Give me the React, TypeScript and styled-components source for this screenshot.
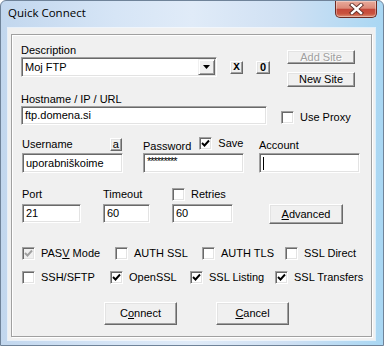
import React from 'react';
import styled, { createGlobalStyle } from 'styled-components';

const GlobalStyle = createGlobalStyle`
	html, body {
		margin: 0;
		padding: 0;
		background: #fff;
	}
	body {
		font-family: 'Liberation Sans', Arial, sans-serif;
		font-size: 11px;
		color: #000;
	}
`;

const Window = styled.div`
	box-sizing: border-box;
	width: 384px;
	height: 346px;
	display: flex;
	flex-direction: column;
	border: 1px solid #6f8399;
	border-radius: 6px 6px 0 0;
	background: linear-gradient(to right, #c2d7ee 0%, #d6e5f6 30%, #e0ebf8 50%, #cfe0f3 75%, #a9d7f3 100%);
	overflow: hidden;
`;

const TitleBar = styled.div`
	display: flex;
	align-items: flex-start;
	height: 27px;
	flex: none;
`;

const Title = styled.span`
	font-family: 'Open Sans', 'Noto Sans', sans-serif;
	font-size: 11.5px;
	line-height: 16px;
	margin: 4px 0 0 7px;
	color: #000;
`;

const CloseButton = styled.div`
	margin-left: auto;
	margin-right: 6px;
	width: 42px;
	height: 17px;
	box-sizing: border-box;
	border: 1px solid #6d2b23;
	border-top: none;
	border-radius: 0 0 5px 5px;
	background: linear-gradient(#e8aa9b 0%, #dc8a79 45%, #c5483a 52%, #c9543f 80%, #dd9277 100%);
	box-shadow: inset 0 0 0 1px rgba(255, 255, 255, 0.35);
	display: flex;
	align-items: center;
	justify-content: center;
`;

const Client = styled.div`
	flex: 1;
	display: flex;
	flex-direction: column;
	margin: 0 8px 5px 7px;
	background: #f0f0f0;
	box-shadow: 0 0 0 1px rgba(255, 255, 255, 0.6);
`;

const Panel = styled.div`
	flex: 1;
	box-sizing: border-box;
	margin: 6px 3px 3px 3px;
	padding: 9px 0 0 10px;
	border: 1px solid #a0a0a0;
	box-shadow: inset 1px 1px #fff, 1px 1px #fff;
	display: flex;
	flex-direction: column;
`;

const Row = styled.div<{ $top?: number }>`
	display: flex;
	align-items: flex-start;
	margin-top: ${(p) => p.$top ?? 0}px;
`;

const Column = styled.div<{ $width: number; $left?: number; $top?: number }>`
	display: flex;
	flex-direction: column;
	width: ${(p) => p.$width}px;
	margin-left: ${(p) => p.$left ?? 0}px;
	margin-top: ${(p) => p.$top ?? 0}px;
	flex: none;
`;

const Header = styled.div<{ $height: number }>`
	display: flex;
	align-items: flex-start;
	height: ${(p) => p.$height}px;
`;

const Label = styled.span<{ $top?: number }>`
	display: block;
	line-height: 13px;
	white-space: nowrap;
	margin-top: ${(p) => p.$top ?? 0}px;
`;

const Field = styled.div<{ $width?: number; $height: number }>`
	box-sizing: border-box;
	width: ${(p) => (p.$width ? `${p.$width}px` : '100%')};
	height: ${(p) => p.$height}px;
	border: 1px solid;
	border-color: #a0a0a0 #fff #fff #a0a0a0;
	box-shadow: inset 1px 1px #696969, inset -1px -1px #e3e3e3;
	background: #fff;
	padding: 0 3px;
	white-space: nowrap;
	overflow: hidden;
	display: flex;
	align-items: center;
`;

const FieldText = styled.span`
	flex: 1;
	line-height: 13px;
`;

const Secret = styled.span`
	font-size: 11px;
	letter-spacing: -1px;
	line-height: 13px;
	margin-top: -4px;
`;

const Caret = styled.span`
	width: 1px;
	height: 13px;
	background: #000;
`;

const DropButton = styled.div`
	box-sizing: border-box;
	width: 17px;
	height: 16px;
	margin-right: -2px;
	background: #f0f0f0;
	border: 1px solid;
	border-color: #f0f0f0 #696969 #696969 #f0f0f0;
	box-shadow: inset 1px 1px #fff, inset -1px -1px #a0a0a0;
	display: flex;
	align-items: center;
	justify-content: center;
`;

const Button = styled.div<{ $width: number; $height: number; $left?: number; $top?: number; $disabled?: boolean }>`
	box-sizing: border-box;
	flex: none;
	width: ${(p) => p.$width}px;
	height: ${(p) => p.$height}px;
	margin-left: ${(p) => p.$left ?? 0}px;
	margin-top: ${(p) => p.$top ?? 0}px;
	background: #f0f0f0;
	border: 1px solid;
	border-color: #fff #696969 #696969 #fff;
	box-shadow: inset -1px -1px #a0a0a0, inset 1px 1px #e3e3e3;
	display: flex;
	align-items: center;
	justify-content: center;
	line-height: 13px;
	white-space: nowrap;
	color: ${(p) => (p.$disabled ? '#a0a0a0' : '#000')};
	text-shadow: ${(p) => (p.$disabled ? '1px 1px #fff' : 'none')};
`;

const BoldGlyph = styled.span<{ $mono?: boolean }>`
	font-family: ${(p) => (p.$mono ? "'Liberation Mono', 'Courier New', monospace" : "'Liberation Sans', Arial, sans-serif")};
	font-weight: bold;
	font-size: 11px;
	color: #000;
`;

const CheckItem = styled.div<{ $width?: number; $left?: number; $top?: number }>`
	display: flex;
	align-items: center;
	flex: none;
	width: ${(p) => (p.$width ? `${p.$width}px` : 'auto')};
	margin-left: ${(p) => p.$left ?? 0}px;
	margin-top: ${(p) => p.$top ?? 0}px;
	white-space: nowrap;
`;

const Box = styled.div<{ $disabled?: boolean }>`
	box-sizing: border-box;
	width: 13px;
	height: 13px;
	flex: none;
	border: 1px solid;
	border-color: #a0a0a0 #fff #fff #a0a0a0;
	box-shadow: inset 1px 1px #696969, inset -1px -1px #e3e3e3;
	background: ${(p) => (p.$disabled ? '#f0f0f0' : '#fff')};
	display: flex;
	align-items: center;
	justify-content: center;
`;

const CheckText = styled.span`
	margin-left: 6px;
	line-height: 13px;
`;

const Key = styled.span`
	text-decoration: underline;
`;

function Check({ checked, disabled }: { checked?: boolean; disabled?: boolean }) {
	return (
		<Box $disabled={disabled}>
			{checked && (
				<svg width='9' height='9' viewBox='0 0 9 9'>
					<path d='M1 4 L3.5 6.5 L8 1.5' fill='none' stroke={disabled ? '#a0a0a0' : '#000'} strokeWidth='1.9' />
				</svg>
			)}
		</Box>
	);
}

type CheckProps = {
	label: React.ReactNode;
	checked?: boolean;
	disabled?: boolean;
	width?: number;
	left?: number;
	top?: number;
};

function CheckBox({ label, checked, disabled, width, left, top }: CheckProps) {
	return (
		<CheckItem $width={width} $left={left} $top={top}>
			<Check checked={checked} disabled={disabled} />
			<CheckText>{label}</CheckText>
		</CheckItem>
	);
}

const ButtonRow = styled(Row)`
	gap: 39px;
	padding-left: 82px;
`;

function App() {
	return (
		<>
			<GlobalStyle />
			<Window>
				<TitleBar>
					<Title>Quick Connect</Title>
					<CloseButton>
						<svg width='15' height='12' viewBox='0 0 15 12'>
							<path d='M3 2 L12 10 M12 2 L3 10' stroke='#5a2a24' strokeWidth='4.2' strokeLinecap='square' />
							<path d='M3 2 L12 10 M12 2 L3 10' stroke='#fff' strokeWidth='2.4' strokeLinecap='square' />
						</svg>
					</CloseButton>
				</TitleBar>
				<Client>
					<Panel>
						<Row>
							<Column $width={196} $left={-1}>
								<Label>Description</Label>
								<Field $height={20}>
									<FieldText>Moj FTP</FieldText>
									<DropButton>
										<svg width='7' height='4' viewBox='0 0 7 4'>
											<path d='M0 0 H7 L3.5 4 Z' fill='#000' />
										</svg>
									</DropButton>
								</Field>
							</Column>
							<Button $width={13} $height={13} $left={13} $top={17}>
								<BoldGlyph $mono>X</BoldGlyph>
							</Button>
							<Button $width={14} $height={13} $left={13} $top={17}>
								<BoldGlyph>0</BoldGlyph>
							</Button>
							<Column $width={68} $left={17} $top={6}>
								<Button $width={68} $height={14} $disabled>
									Add Site
								</Button>
								<Button $width={68} $height={15} $top={8}>
									New Site
								</Button>
							</Column>
						</Row>

						<Row $top={6}>
							<Column $width={246} $left={-1}>
								<Label>Hostname / IP / URL</Label>
								<Field $height={19}>
									<FieldText>ftp.domena.si</FieldText>
								</Field>
							</Column>
							<CheckBox label='Use Proxy' left={14} top={18} />
						</Row>

						<Row $top={12}>
							<Column $width={101}>
								<Header $height={16}>
									<Label $top={1}>Username</Label>
									<Button $width={12} $height={13} $left={37} $top={1}>
										a
									</Button>
								</Header>
								<Field $height={20}>
									<FieldText>uporabniškoime</FieldText>
								</Field>
							</Column>
							<Column $width={101} $left={20}>
								<Header $height={16}>
									<Label $top={3}>Password</Label>
									<CheckBox label='Save' checked left={8} />
								</Header>
								<Field $height={20}>
									<Secret>*********</Secret>
								</Field>
							</Column>
							<Column $width={101} $left={15}>
								<Header $height={16}>
									<Label $top={2}>Account</Label>
								</Header>
								<Field $height={20}>
									<Caret />
								</Field>
							</Column>
						</Row>

						<Row $top={14}>
							<Column $width={59}>
								<Header $height={17}>
									<Label $top={1}>Port</Label>
								</Header>
								<Field $height={19}>
									<FieldText>21</FieldText>
								</Field>
							</Column>
							<Column $width={47} $left={22}>
								<Header $height={17}>
									<Label $top={1}>Timeout</Label>
								</Header>
								<Field $height={19}>
									<FieldText>60</FieldText>
								</Field>
							</Column>
							<Column $width={61} $left={22}>
								<Header $height={17}>
									<CheckBox label='Retries' top={1} />
								</Header>
								<Field $height={19}>
									<FieldText>60</FieldText>
								</Field>
							</Column>
							<Button $width={74} $height={20} $left={36} $top={17}>
								<span>
									<Key>A</Key>dvanced
								</span>
							</Button>
						</Row>

						<Row $top={23}>
							<CheckBox
								label={
									<>
										PAS<Key>V</Key> Mode
									</>
								}
								checked
								disabled
								width={93}
							/>
							<CheckBox label='AUTH SSL' width={87} />
							<CheckBox label='AUTH TLS' width={83} />
							<CheckBox label='SSL Direct' />
						</Row>

						<Row $top={11}>
							<CheckBox label='SSH/SFTP' width={88} />
							<CheckBox label='OpenSSL' checked width={80} />
							<CheckBox label='SSL Listing' checked width={85} />
							<CheckBox label='SSL Transfers' checked />
						</Row>

						<ButtonRow $top={18}>
							<Button $width={73} $height={23}>
								<span>
									C<Key>o</Key>nnect
								</span>
							</Button>
							<Button $width={73} $height={23}>
								<span>
									<Key>C</Key>ancel
								</span>
							</Button>
						</ButtonRow>
					</Panel>
				</Client>
			</Window>
		</>
	);
}

export default App;
